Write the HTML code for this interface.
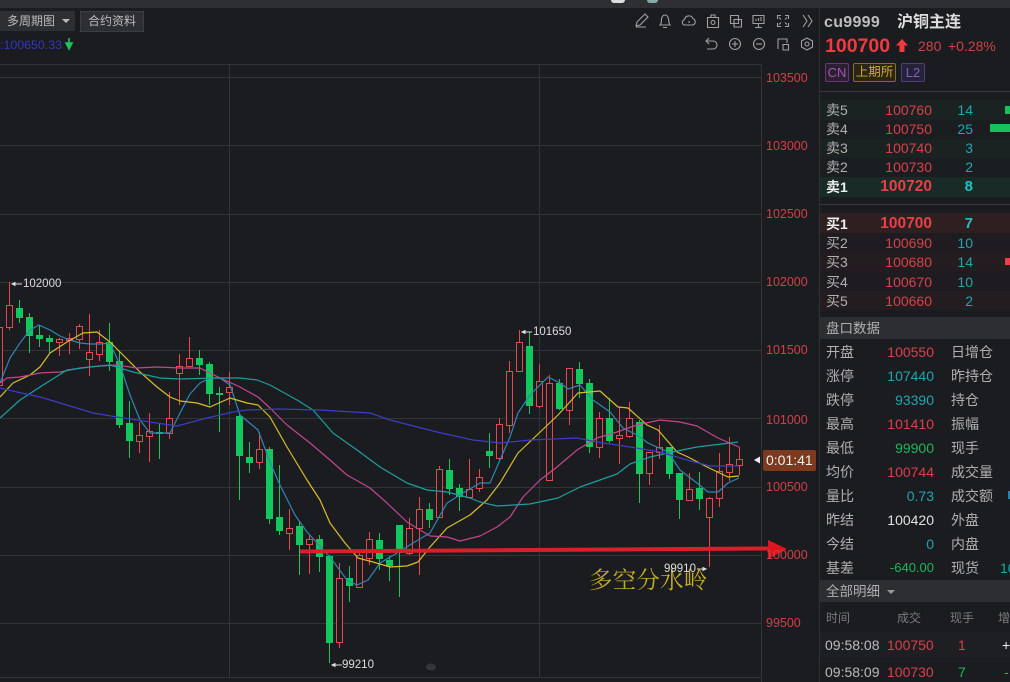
<!DOCTYPE html>
<html><head><meta charset="utf-8"><style>
html,body{margin:0;padding:0;background:#1b1c20}
#p{position:relative;width:1010px;height:682px;overflow:hidden;background:#1b1c20;font-family:"Liberation Sans","Noto Sans CJK SC",sans-serif;color:#b5b5b5;filter:blur(.3px)}
.t{position:absolute;white-space:nowrap;font-size:14px;line-height:18px}
.b{position:absolute}
.ax{left:766px;color:#d33f48;font-size:12.5px;line-height:16px}
.l{left:826px;color:#b0b0b0;font-size:14px}
.l2{left:951px;color:#b0b0b0;font-size:14px}
.r{color:#d9404a}.c{color:#1fa5b0}.g{color:#1fb45c}
.pr{right:78px}.q{right:37px}
</style></head><body><div id="p">
<div class="b" style="left:0;top:0;width:1010px;height:8px;background:#2e2f33"></div>
<div class="b" style="left:611px;top:0;width:14px;height:3px;background:#ddd;border-radius:0 0 5px 5px"></div>
<div class="b" style="left:647px;top:0;width:11px;height:3px;background:#8aa;border-radius:0 0 5px 5px"></div>

<div class="b" style="left:0;top:11px;width:75px;height:20px;background:#2e2f33"></div>
<div class="t" style="left:7px;top:12px;font-size:12px;color:#bbb">多周期图</div>
<div class="b" style="left:62px;top:19px;border:4px solid transparent;border-top:4px solid #bbb"></div>
<div class="b" style="left:80px;top:11px;width:62px;height:19px;background:#2e2f33;border:1px solid #3c3e41"></div>
<div class="t" style="left:88px;top:12px;font-size:12px;color:#bbb">合约资料</div>
<div class="t" style="left:0;top:36px;font-size:12.4px;color:#3434c4">:100650.33</div>

<svg class="b" style="left:0;top:0" width="820" height="682" viewBox="0 0 820 682">
<path d="M69 38v8M66 43l3 6 3-6z" stroke="#1cc45c" stroke-width="1.6" fill="#1cc45c"/>
<g stroke="#313336" fill="none">
<path d="M0 64.5H761.5M0 77.5H761.5M0 145.5H761.5M0 214.5H761.5M0 282.5H761.5M0 350.5H761.5M0 418.5H761.5M0 487.5H761.5M0 555.5H761.5M0 623.5H761.5M0 677.5H761.5M229.5 64V677M539.5 64V677M761.5 64V682"/>
</g>
<path stroke="#17c65e" fill="none" d="M19.5 300V323M29.5 313V353M39.5 325V347M49.5 335V353M109.5 323V371M119.5 352V428M129.5 401V458M159.5 424V459M199.5 350V375M209.5 362V405M219.5 387V432M239.5 415V500M249.5 442V473M269.5 447V524M279.5 465V535M299.5 522V575M319.5 535V572M329.5 555V663M349.5 566V602M379.5 533V570M389.5 556V581M399.5 525V597M429.5 503V528M449.5 459V495M459.5 484V511M489.5 433V468M529.5 332V414M559.5 379V410M579.5 362V398M589.5 379V453M609.5 398V443M639.5 420V503M669.5 447V479M679.5 473V519M699.5 472V510"/>
<path fill="#12c75c" d="M16 308h7v10h-7zM26 317h7v19h-7zM36 335h7v4h-7zM46 338h7v4h-7zM106 342h7v20h-7zM116 361h7v64h-7zM126 423h7v18h-7zM156 432h7v2h-7zM196 358h7v7h-7zM206 364h7v30h-7zM216 393h7v2h-7zM236 416h7v40h-7zM246 457h7v6h-7zM266 449h7v70h-7zM276 517h7v14h-7zM296 526h7v19h-7zM316 539h7v18h-7zM326 556h7v87h-7zM346 578h7v8h-7zM376 540h7v19h-7zM386 560h7v6h-7zM396 525h7v28h-7zM426 509h7v11h-7zM446 470h7v19h-7zM456 488h7v9h-7zM486 451h7v5h-7zM526 346h7v60h-7zM556 383h7v26h-7zM576 369h7v15h-7zM586 383h7v64h-7zM606 418h7v23h-7zM636 422h7v52h-7zM666 447h7v27h-7zM676 473h7v27h-7zM696 488h7v11h-7z"/>
<path stroke="#e8474c" fill="none" d="M-.5 280V395M9.5 282V330M59.5 338V356M69.5 333V354M79.5 324V349M89.5 314V376M99.5 330V361M139.5 422V453M149.5 413V462M169.5 392V439M179.5 354V405M189.5 337V367M229.5 372V405M259.5 432V469M289.5 509V550M309.5 535V574M339.5 563V648M359.5 553V587M369.5 532V565M409.5 518V555M419.5 497V575M439.5 466V518M469.5 459V497M479.5 469V492M499.5 418V460M509.5 361V433M519.5 330V372M539.5 364V408M549.5 375V481M569.5 368V425M599.5 412V458M619.5 407V464M629.5 402V438M649.5 452V485M659.5 425V459M689.5 473V500M709.5 497V567M719.5 453V507M729.5 437V481M739.5 447V475"/>
<path stroke="#e8474c" fill="#1b1c20" d="M-3.5 327.5h6v58h-6zM6.5 305.5h6v22h-6zM56.5 339.5h6v3h-6zM66.5 338.5h6v2h-6zM76.5 326.5h6v13h-6zM86.5 352.5h6v7h-6zM96.5 342.5h6v12h-6zM136.5 435.5h6v6h-6zM146.5 431.5h6v5h-6zM166.5 418.5h6v15h-6zM176.5 366.5h6v7h-6zM186.5 358.5h6v8h-6zM226.5 387.5h6v5h-6zM256.5 449.5h6v13h-6zM286.5 528.5h6v5h-6zM306.5 539.5h6v5h-6zM336.5 578.5h6v64h-6zM356.5 555.5h6v32h-6zM366.5 539.5h6v19h-6zM406.5 528.5h6v25h-6zM416.5 509.5h6v19h-6zM436.5 469.5h6v48h-6zM466.5 489.5h6v8h-6zM476.5 477.5h6v11h-6zM496.5 424.5h6v34h-6zM506.5 371.5h6v54h-6zM516.5 342.5h6v29h-6zM536.5 381.5h6v25h-6zM546.5 383.5h6v97h-6zM566.5 368.5h6v42h-6zM596.5 418.5h6v29h-6zM616.5 435.5h6v3h-6zM626.5 418.5h6v18h-6zM646.5 452.5h6v21h-6zM656.5 447.5h6v5h-6zM686.5 489.5h6v11h-6zM706.5 498.5h6v19h-6zM716.5 471.5h6v27h-6zM726.5 464.5h6v8h-6zM736.5 459.5h6v6h-6z"/>
<g fill="none" stroke-width="1.2" stroke-linejoin="round">
<polyline stroke="#2f86b4" points="0,383 10,358 20,343 30,330 39,325 50,330 60,336 70,340 80,343 90,344 100,344 110,343 120,365 130,395 140,420 150,433 160,433 170,433 180,413 190,394 200,383 210,378 220,378 230,385 240,415 258,430 270,462 279,483 295,515 307,532 330,557 347,580 357,585 368,580 380,563 397,553 413,543 430,533 447,503 463,493 480,483 490,483 500,460 510,437 518,413 530,395 548,377 560,383 568,389 580,385 593,400 610,412 623,428 637,435 648,443 668,452 680,470 697,483 708,492 718,492 728,483 739,478"/>
<polyline stroke="#d8bd2a" points="0,397 13,383 30,375 40,367 50,353 67,342 83,333 97,332 110,342 123,355 140,372 157,387 170,397 180,401 197,403 210,407 230,398 247,403 258,405 270,417 287,447 307,480 320,500 330,523 345,543 358,558 373,562 390,567 407,566 418,562 430,547 447,528 470,515 487,500 500,483 518,453 537,435 558,415 578,393 600,391 618,407 628,408 647,425 658,430 677,452 688,457 707,467 728,477 739,476"/>
<polyline stroke="#c2468f" points="0,383 7,378 20,377 40,373 60,372 80,368 100,366 117,365 137,368 157,367 180,368 200,368 220,378 240,387 258,397 270,408 287,425 310,443 330,460 347,475 370,488 387,503 407,522 430,536 447,537 460,541 480,536 497,527 510,517 523,497 540,480 557,467 577,450 597,438 617,432 637,425 660,420 680,422 697,426 718,438 739,447"/>
<polyline stroke="#1c9ea0" points="0,418 20,400 40,387 67,370 90,367 110,365 133,372 160,378 180,379 213,378 240,378 257,380 270,385 297,400 313,410 333,433 357,450 380,467 407,483 427,490 447,492 470,498 480,502 497,506 530,504 558,498 580,487 617,474 630,464 650,457 677,451 697,447 738,442"/>
<polyline stroke="#3c3cc4" points="0,388 17,392 40,397 67,405 93,413 117,417 150,422 177,426 207,418 233,412 247,410 280,409 320,410 370,413 390,420 437,432 473,440 500,443 530,440 577,438 597,442 630,447 660,452 687,460 710,466 739,466"/>
</g>
<path d="M300 551.5L770 548.5" stroke="#d6202a" stroke-width="4"/>
<path d="M768 540L787 549L768 559z" fill="#e0141f"/>
<path d="M754 460l6-3.5v7z" fill="#eee"/>
<path d="M12 284h10M12 284l3-1.5v3z M522 332h10M522 332l3-1.5v3z M332 665h10M332 665l3-1.5v3z M697 569h9M706 569l-3-1.5v3z" stroke="#ddd" fill="#ddd"/>
<ellipse cx="431" cy="667" rx="5" ry="3.500" fill="#4a4b4f" opacity=".55"/>
</svg>

<div class="t" style="left:23px;top:276px;font-size:11.5px;line-height:16px;color:#ddd">102000</div>
<div class="t" style="left:533px;top:324px;font-size:11.5px;line-height:16px;color:#ddd">101650</div>
<div class="t" style="left:342px;top:657px;font-size:11.5px;line-height:16px;color:#ddd">99210</div>
<div class="t" style="left:589px;top:562px;font-size:23.5px;line-height:32px;letter-spacing:.2px;color:#c4ab27;font-family:'Noto Serif CJK SC',serif">多空分水岭</div>
<div class="t" style="left:664px;top:561px;font-size:11.5px;line-height:16px;color:#ddd">99910</div>

<div class="t ax" style="top:70px">103500</div>
<div class="t ax" style="top:138px">103000</div>
<div class="t ax" style="top:206px">102500</div>
<div class="t ax" style="top:274px">102000</div>
<div class="t ax" style="top:342px">101500</div>
<div class="t ax" style="top:412px">101000</div>
<div class="t ax" style="top:479px">100500</div>
<div class="t ax" style="top:547px">100000</div>
<div class="t ax" style="top:615px;left:766px">99500</div>
<div class="b" style="left:763px;top:450px;width:53px;height:21px;background:#7d3a1f;border-radius:2px"></div>
<div class="t" style="left:766px;top:451px;font-size:14px;color:#f0f0f0">0:01:41</div>

<svg class="b" style="left:630px;top:10px" width="190" height="46" viewBox="630 10 190 46" fill="none" stroke="#a0a0a0" stroke-width="1.1">
<path d="M636 26l1-4 8-8 3 3-8 8zM636 27h10"/>
<path d="M660 25c2-2 1-3 1.500-6 .5-3 2-4 3.500-4s3 1 3.500 4c.5 3 0 4 1.500 6zM663 27.500h4"/>
<path d="M684 25a3 3 0 0 1 .5-5.500 4.500 4.500 0 0 1 8.500-1 3.500 3.500 0 0 1 0 6.500zM689 23v-2"/>
<path d="M707.500 17.500h11v10h-11zM711 17.500v-2.500h4v2.500"/><circle cx="713" cy="22.500" r="2"/>
<path d="M730.500 15.500h8v8h-8zM734 19.500h7.500v7.500h-7.500z"/>
<path d="M753 15.500h11v8h-11zM755 27.500h7M758.500 23.500v4M756 21v-2M758.500 21v-3M761 21v-4"/>
<path d="M777.500 19v-3.500h3.500M785 15.500h3.500v3.500M788.500 23v3.500h-3.500M781 26.500h-3.500v-3.500M779 17.500l2 2M787 17.500l-2 2M787 24.500l-2-2M779 24.500l2-2"/>
<path d="M803 15l4 6-4 6M808 15l4 6-4 6"/>
<path d="M709 38l-3 3 3 3M706 41h7a3.500 3.500 0 0 1 0 8h-6"/>
<circle cx="735" cy="44" r="5.500"/><path d="M732 44h6M735 41v6"/>
<circle cx="759" cy="44" r="5.500"/><path d="M756 44h6"/>
<path d="M778 49v-10h9v4M783 44.500h5.500v5.500h-5.500z"/>
<path d="M807 38l5.500 3v6l-5.500 3-5.500-3v-6z"/><circle cx="807" cy="44" r="2"/>
</svg>

<div class="b" style="left:819px;top:8px;width:1px;height:674px;background:#303235"></div>
<div class="t" style="left:824px;top:14px;font-size:16px;font-weight:bold;color:#bdbdbd;letter-spacing:.3px">cu9999</div>
<div class="t" style="left:897px;top:14px;font-size:16px;font-weight:bold;color:#dedede">沪铜主连</div>
<div class="t" style="left:825px;top:35px;font-size:19.500px;line-height:22px;font-weight:bold;color:#f03a3e">100700</div>
<svg class="b" style="left:895px;top:39px" width="14" height="14"><path d="M7 0L13 6.500H9.500V13H4.500V6.500H1z" fill="#f03a3e"/></svg>
<div class="t" style="left:918px;top:37px;color:#cc4247">280</div>
<div class="t" style="left:948px;top:37px;color:#cc4247">+0.28%</div>
<div class="t" style="left:825px;top:63px;width:22px;height:17px;border:1px solid #6b3578;border-radius:2px;background:#2a2030;text-align:center;font-size:13px;line-height:17px;color:#a552b8">CN</div>
<div class="t" style="left:853px;top:63px;width:41px;height:17px;border:1px solid #8a6f1c;border-radius:2px;background:#2a2614;text-align:center;font-size:12.500px;line-height:17px;color:#d1a82a">上期所</div>
<div class="t" style="left:901px;top:63px;width:22px;height:17px;border:1px solid #4f3f78;border-radius:2px;background:#25223a;text-align:center;font-size:13px;line-height:17px;color:#8560c0">L2</div>
<div class="b" style="left:820px;top:91px;width:190px;height:1px;background:#36383b"></div>
<div class="b" style="left:820px;top:100px;width:190px;height:77px;background:#1b2222"></div>
<div class="b" style="left:820px;top:120px;width:190px;height:19px;background:#1b1e21"></div>
<div class="b" style="left:820px;top:158px;width:190px;height:19px;background:#1b1e21"></div>
<div class="b" style="left:820px;top:177px;width:190px;height:20px;background:#182b27"></div>
<div class="b" style="left:820px;top:204px;width:190px;height:1px;background:#36383b"></div>
<div class="b" style="left:820px;top:213px;width:190px;height:20px;background:#2e2021"></div>
<div class="b" style="left:820px;top:233px;width:190px;height:77px;background:#1e1c20"></div>
<div class="b" style="left:820px;top:252px;width:190px;height:19px;background:#231d20"></div>
<div class="b" style="left:820px;top:291px;width:190px;height:19px;background:#231d20"></div>
<div class="b" style="left:1005px;top:106px;width:5px;height:8px;background:#17c25b"></div>
<div class="b" style="left:990px;top:124px;width:20px;height:8px;background:#17c25b"></div>
<div class="b" style="left:1005px;top:258px;width:5px;height:7px;background:#ea3f47"></div>

<div class="t l" style="top:101px">卖5</div><div class="t pr r" style="top:101px">100760</div><div class="t q c" style="top:101px">14</div>
<div class="t l" style="top:120px">卖4</div><div class="t pr r" style="top:120px">100750</div><div class="t q c" style="top:120px">25</div>
<div class="t l" style="top:139px">卖3</div><div class="t pr r" style="top:139px">100740</div><div class="t q c" style="top:139px">3</div>
<div class="t l" style="top:158px">卖2</div><div class="t pr r" style="top:158px">100730</div><div class="t q c" style="top:158px">2</div>
<div class="t l" style="top:178px;color:#eee;font-weight:bold">卖1</div><div class="t pr r" style="top:178px;font-weight:bold;font-size:15.5px;color:#ea3f47">100720</div><div class="t q c" style="top:178px;font-weight:bold;font-size:15px;color:#22c0c4">8</div>
<div class="t l" style="top:215px;color:#eee;font-weight:bold">买1</div><div class="t pr r" style="top:215px;font-weight:bold;font-size:15.5px;color:#ea3f47">100700</div><div class="t q c" style="top:215px;font-weight:bold;font-size:15px;color:#22c0c4">7</div>
<div class="t l" style="top:234px">买2</div><div class="t pr r" style="top:234px">100690</div><div class="t q c" style="top:234px">10</div>
<div class="t l" style="top:253px">买3</div><div class="t pr r" style="top:253px">100680</div><div class="t q c" style="top:253px">14</div>
<div class="t l" style="top:273px">买4</div><div class="t pr r" style="top:273px">100670</div><div class="t q c" style="top:273px">10</div>
<div class="t l" style="top:292px">买5</div><div class="t pr r" style="top:292px">100660</div><div class="t q c" style="top:292px">2</div>

<div class="b" style="left:820px;top:317px;width:190px;height:22px;background:#2c2e32"></div>
<div class="t l" style="top:320px;font-size:13.500px">盘口数据</div>
<div class="t l" style="top:343px">开盘</div><div class="t pr r" style="top:343px;right:76px">100550</div><div class="t l2" style="top:343px">日增仓</div>
<div class="t l" style="top:367px">涨停</div><div class="t pr c" style="top:367px;right:76px">107440</div><div class="t l2" style="top:367px">昨持仓</div>
<div class="t l" style="top:391px">跌停</div><div class="t pr c" style="top:391px;right:76px">93390</div><div class="t l2" style="top:391px">持仓</div>
<div class="t l" style="top:415px">最高</div><div class="t pr r" style="top:415px;right:76px">101410</div><div class="t l2" style="top:415px">振幅</div>
<div class="t l" style="top:439px">最低</div><div class="t pr g" style="top:439px;right:76px">99900</div><div class="t l2" style="top:439px">现手</div>
<div class="t l" style="top:463px">均价</div><div class="t pr r" style="top:463px;right:76px">100744</div><div class="t l2" style="top:463px">成交量</div>
<div class="t l" style="top:487px">量比</div><div class="t pr c" style="top:487px;right:76px">0.73</div><div class="t l2" style="top:487px">成交额</div>
<div class="b" style="left:1008px;top:491px;width:2px;height:8px;background:#1f86b0"></div>
<div class="t l" style="top:511px">昨结</div><div class="t pr" style="top:511px;right:76px;color:#e0e0e0">100420</div><div class="t l2" style="top:511px">外盘</div>
<div class="t l" style="top:535px">今结</div><div class="t pr c" style="top:535px;right:76px">0</div><div class="t l2" style="top:535px">内盘</div>
<div class="t l" style="top:559px">基差</div><div class="t pr g" style="top:559px;right:76px;font-size:13px">-640.00</div><div class="t l2" style="top:559px">现货</div><div class="t c" style="left:1000px;top:559px">100060</div>

<div class="b" style="left:820px;top:580px;width:190px;height:22px;background:#2c2e32"></div>
<div class="t l" style="top:583px;font-size:13.500px">全部明细</div>
<div class="b" style="left:887px;top:590px;border:4px solid transparent;border-top:4px solid #999"></div>
<div class="t" style="left:826px;top:609px;font-size:12px;color:#7b7b7b">时间</div>
<div class="t" style="left:897px;top:609px;font-size:12px;color:#7b7b7b">成交</div>
<div class="t" style="left:950px;top:609px;font-size:12px;color:#7b7b7b">现手</div>
<div class="t" style="left:998px;top:609px;font-size:12px;color:#7b7b7b">增</div>
<div class="b" style="left:820px;top:632px;width:190px;height:26px;background:#1e1f23"></div>
<div class="t" style="left:825px;top:636px;color:#bbb">09:58:08</div><div class="t r" style="left:887px;top:636px">100750</div><div class="t r" style="left:958px;top:636px">1</div><div class="t" style="left:1002px;top:636px;color:#eee">+</div>
<div class="t" style="left:825px;top:663px;color:#bbb">09:58:09</div><div class="t r" style="left:887px;top:663px">100730</div><div class="t g" style="left:958px;top:663px">7</div><div class="t g" style="left:1004px;top:663px">-</div>
</div></body></html>
